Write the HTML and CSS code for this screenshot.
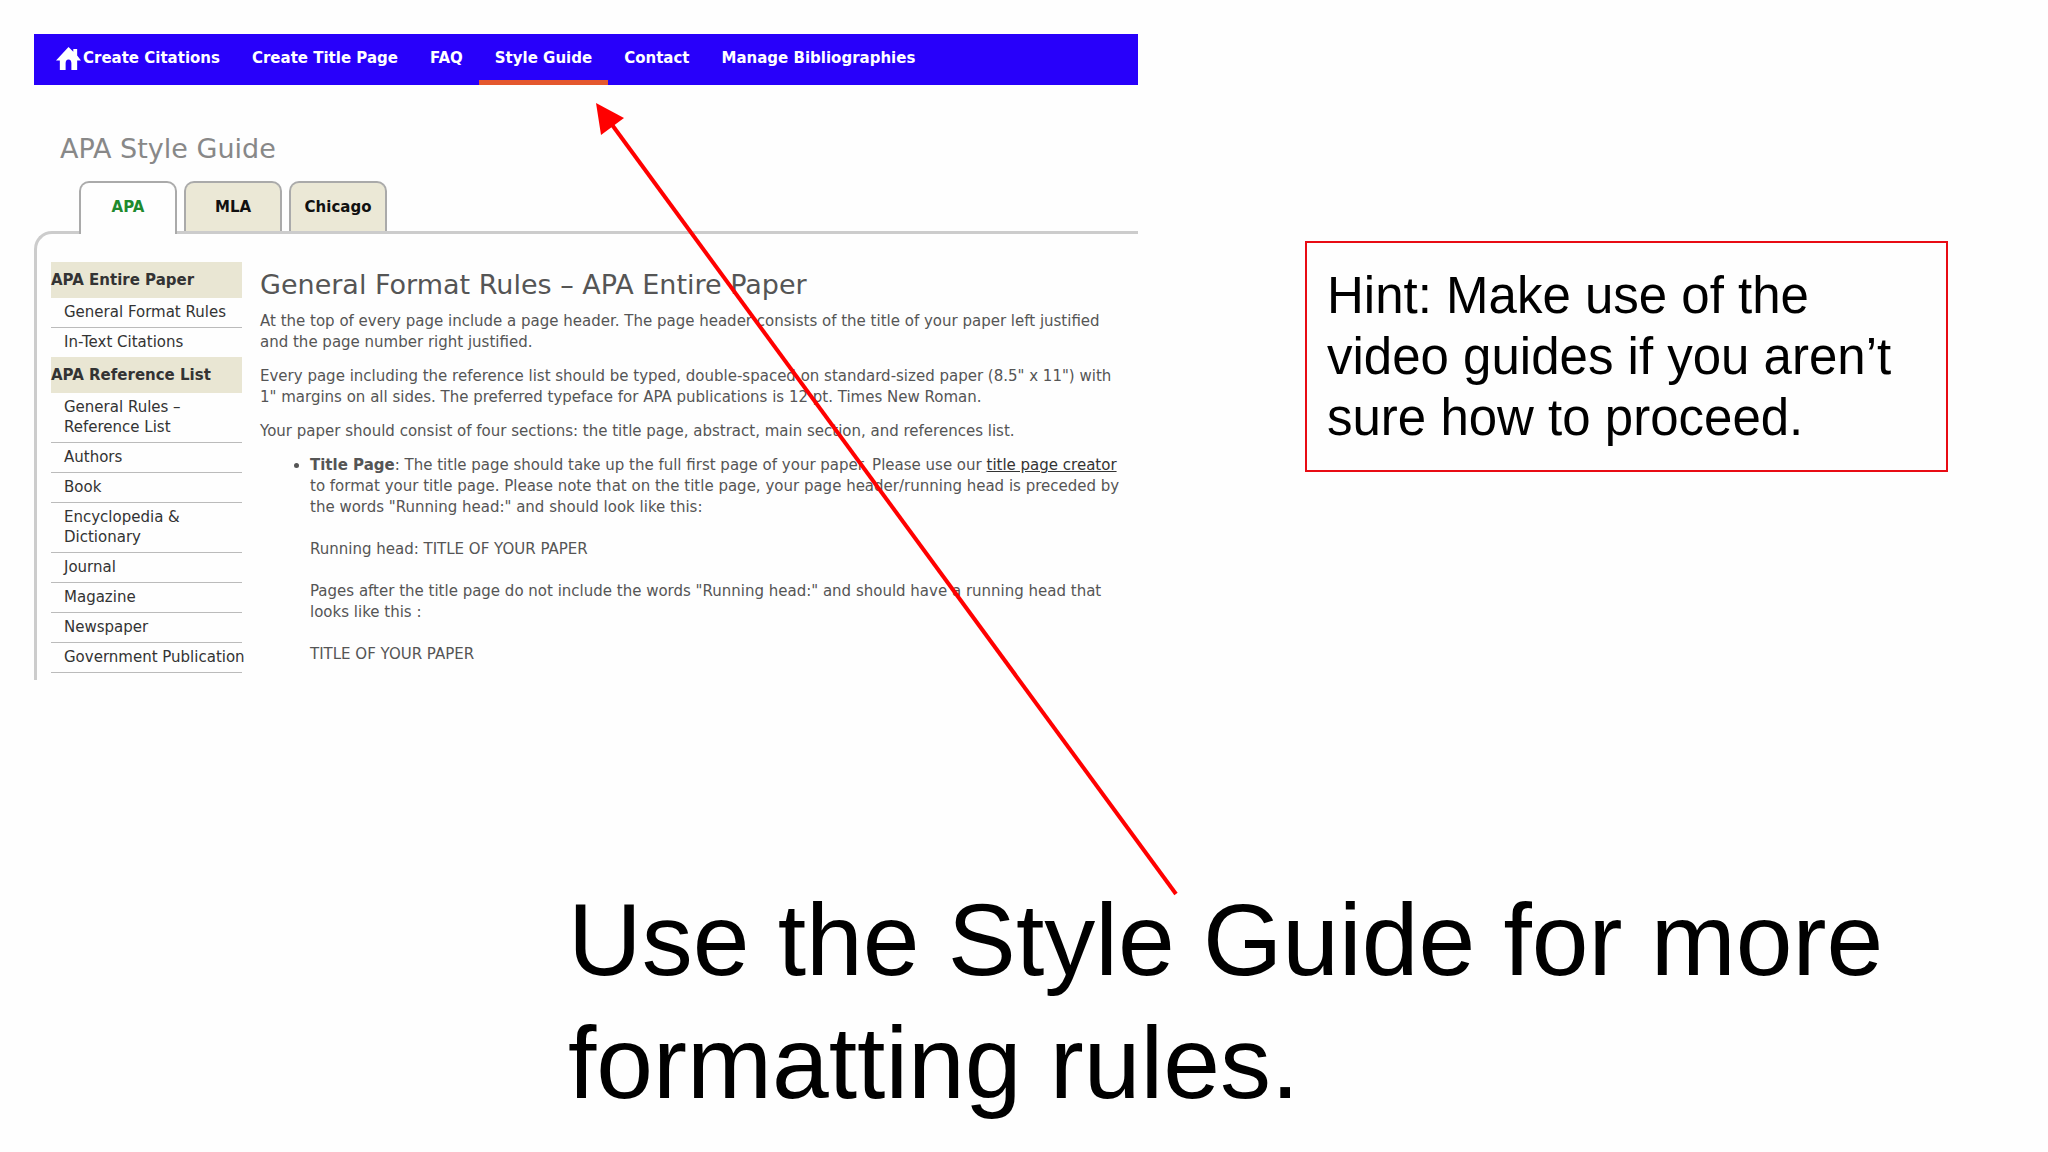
FILE: index.html
```html
<!DOCTYPE html>
<html lang="en">

<head>
    <meta charset="UTF-8">
    <meta name="viewport" content="width=device-width, initial-scale=1.0">
    <title>APA Style Guide</title>
    <link rel="stylesheet" href="styles.css">
</head>

<body>
    <div class="slide">
        <div class="top">
            <div class="site">
                <nav class="navbar">
                    <a href="#" class="home">
                        <svg class="home-icon" viewBox="0 0 26 26" aria-hidden="true">
                            <path fill="#fff" d="M13 1 L18 6 V3 H22 V10 L26 15 H22 V25 H16 V18 Q16 14 13 14 Q10 14 10 18 V25 H4 V15 H0 Z" />
                        </svg>
                        Create Citations
                    </a>
                    <a href="#">Create Title Page</a>
                    <a href="#">FAQ</a>
                    <a href="#" class="current">Style Guide</a>
                    <a href="#">Contact</a>
                    <a href="#">Manage Bibliographies</a>
                </nav>

                <h1 class="site-title">APA Style Guide</h1>

                <div class="tabs">
                    <button type="button" class="tab active">APA</button>
                    <button type="button" class="tab">MLA</button>
                    <button type="button" class="tab">Chicago</button>
                </div>

                <div class="panel">
                    <aside class="sidebar">
                        <h3>APA Entire Paper</h3>
                        <ul>
                            <li><a href="#">General Format Rules</a></li>
                            <li><a href="#">In-Text Citations</a></li>
                        </ul>
                        <h3>APA Reference List</h3>
                        <ul class="references">
                            <li><a href="#">General Rules –<br>Reference List</a></li>
                            <li><a href="#">Authors</a></li>
                            <li><a href="#">Book</a></li>
                            <li><a href="#">Encyclopedia &amp;<br>Dictionary</a></li>
                            <li><a href="#">Journal</a></li>
                            <li><a href="#">Magazine</a></li>
                            <li><a href="#">Newspaper</a></li>
                            <li><a href="#">Government Publication</a></li>
                        </ul>
                    </aside>

                    <main class="content">
                        <h2>General Format Rules – APA Entire Paper</h2>
                        <p>At the top of every page include a page header. The page header consists of the title of your paper left justified and the page number right justified.</p>
                        <p>Every page including the reference list should be typed, double-spaced on standard-sized paper (8.5" x 11") with 1" margins on all sides. The preferred typeface for APA publications is 12 pt. Times New Roman.</p>
                        <p>Your paper should consist of four sections: the title page, abstract, main section, and references list.</p>
                        <ul>
                            <li>
                                <b>Title Page</b>: The title page should take up the full first page of your paper. Please use our <a href="#">title page creator</a> to format your title page. Please note that on the title page, your page header/running head is preceded by the words "Running head:" and should look like this:
                                <br><br>
                                Running head: TITLE OF YOUR PAPER
                                <br><br>
                                Pages after the title page do not include the words "Running head:" and should have a running head that looks like this :
                                <br><br>
                                TITLE OF YOUR PAPER
                            </li>
                        </ul>
                    </main>
                </div>
            </div>

            <div class="hint">Hint: Make use of the video guides if you aren’t sure how to proceed.</div>
        </div>

        <div class="caption">Use the Style Guide for more formatting rules.</div>

        <!-- arrow from the caption up to the Style Guide link -->
        <svg class="arrow" viewBox="0 0 2048 1152" aria-hidden="true">
            <line x1="1176" y1="894" x2="610" y2="122" stroke="#f00" stroke-width="4" />
            <polygon points="596,103 624,118 601,135" fill="#f00" />
        </svg>
    </div>
</body>

</html>
```

FILE: styles.css
```css
body {
    margin: 0;
    background-color: #fefefe;
    font-family: "Liberation Sans", Arial, sans-serif;
    color: #000;
}

.slide {
    position: relative;
    box-sizing: border-box;
    min-height: 100vh;
    padding: 34px 100px 0 34px;
}

.top {
    display: grid;
    grid-template-columns: 1104fr 643fr;
    column-gap: 167px;
    align-items: start;
}

.site {
    font-family: Verdana, "DejaVu Sans", sans-serif;
    font-size: 15px;
    line-height: 21px;
    color: #555;
}

.navbar {
    display: flex;
    height: 51px;
    padding-left: 6px;
    background-color: #2800fa;
}

.navbar a {
    display: flex;
    align-items: center;
    box-sizing: border-box;
    padding: 3px 16px 0;
    border-bottom: 5px solid transparent;
    color: #fff;
    font-weight: bold;
    text-decoration: none;
    white-space: nowrap;
}

.navbar .current {
    border-bottom-color: #e4572e;
}

.home-icon {
    width: 25px;
    height: 25px;
    margin-right: 2px;
}

.site-title {
    margin: 48px 0 0 26px;
    font-size: 27px;
    line-height: 32px;
    font-weight: normal;
    color: #888;
}

.tabs {
    display: flex;
    gap: 7px;
    margin-top: 16px;
    padding-left: 45px;
}

.tab {
    width: 98px;
    height: 50px;
    padding: 0;
    border: 2px solid #aaa;
    border-bottom: none;
    border-radius: 10px 10px 0 0;
    background-color: #ebe8d6;
    font-family: inherit;
    font-size: 15px;
    font-weight: bold;
    color: #111;
    cursor: pointer;
}

.tab.active {
    /* covers the top border of the panel */
    z-index: 1;
    margin-bottom: -3px;
    height: 53px;
    padding-bottom: 3px;
    background-color: #fefefe;
    color: #1e8a2e;
}

.panel {
    display: flex;
    gap: 18px;
    padding: 28px 14px 7px 14px;
    border-top: 3px solid #ccc;
    border-left: 3px solid #ccc;
    border-top-left-radius: 18px;
}

.sidebar {
    flex: 0 0 191px;
    min-width: 0;
    line-height: 20px;
    color: #333;
}

.sidebar h3 {
    margin: 0;
    padding: 8px 0;
    background-color: #e9e6d3;
    font-size: 15px;
    color: #333;
}

.sidebar ul {
    margin: 0;
    padding: 0;
    list-style: none;
}

.sidebar li {
    padding: 4px 0 5px 13px;
    border-bottom: 1px solid #bbb;
    white-space: nowrap;
}

.sidebar li:last-child {
    border-bottom: none;
}

.sidebar .references li:last-child {
    border-bottom: 1px solid #bbb;
}

.sidebar a {
    color: inherit;
    text-decoration: none;
}

.content {
    flex: 1;
}

.content h2 {
    margin: 7px 0 10px;
    font-size: 27px;
    line-height: 32px;
    font-weight: normal;
    color: #555;
}

.content p {
    margin: 0 0 13px;
}

.content ul {
    margin: 0;
    padding-left: 50px;
}

.content a {
    color: #333;
}

.hint {
    margin-top: 207px;
    padding: 22px 20px;
    border: 2px solid #e80c14;
    font-size: 51px;
    line-height: 61px;
}

.caption {
    padding: 199px 0 0 534px;
    font-size: 102px;
    line-height: 123px;
}

.arrow {
    position: absolute;
    top: 0;
    left: 0;
    width: 100%;
    pointer-events: none;
}
```
